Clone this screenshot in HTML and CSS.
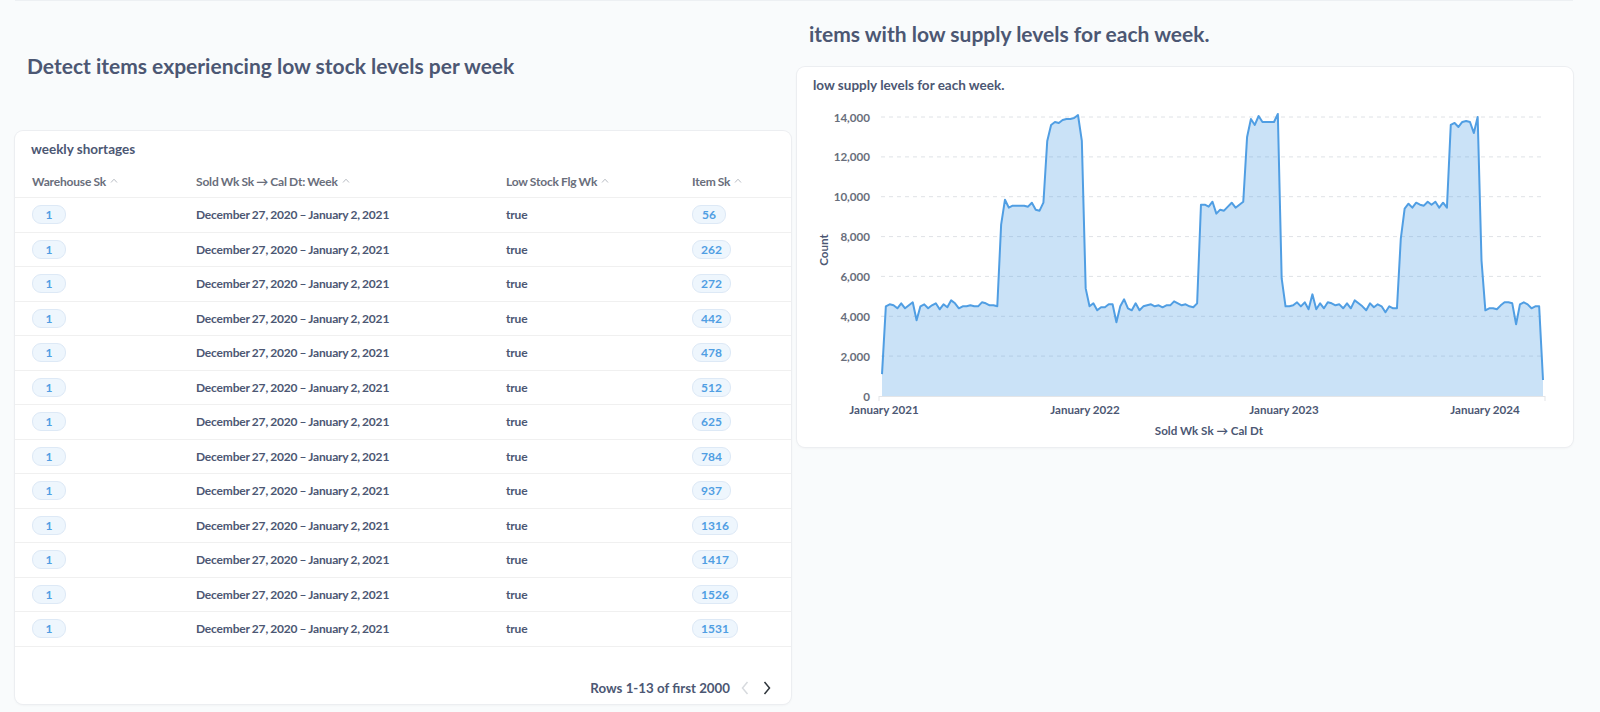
FILE: index.html
```html
<!DOCTYPE html>
<html lang="en">
<head>
<meta charset="utf-8">
<title>Low stock dashboard</title>
<link rel="stylesheet" href="styles.css">
</head>
<body>
<div class="dashboard">
  <div class="col">
    <div class="heading heading-left">Detect items experiencing low stock levels per week</div>
    <div class="card table-card">
      <div class="card-title">weekly shortages</div>
      <div class="trow thead">
        <div class="th">Warehouse Sk<svg class="caret" viewBox="0 0 8 5" width="8" height="5"><polyline points="1,4.5 4,1.2 7,4.5"/></svg></div>
        <div class="th">Sold Wk Sk → Cal Dt: Week<svg class="caret" viewBox="0 0 8 5" width="8" height="5"><polyline points="1,4.5 4,1.2 7,4.5"/></svg></div>
        <div class="th">Low Stock Flg Wk<svg class="caret" viewBox="0 0 8 5" width="8" height="5"><polyline points="1,4.5 4,1.2 7,4.5"/></svg></div>
        <div class="th">Item Sk<svg class="caret" viewBox="0 0 8 5" width="8" height="5"><polyline points="1,4.5 4,1.2 7,4.5"/></svg></div>
      </div>
      <div class="trow"><div><span class="pill">1</span></div><div>December 27, 2020 – January 2, 2021</div><div>true</div><div><span class="pill">56</span></div></div>
      <div class="trow"><div><span class="pill">1</span></div><div>December 27, 2020 – January 2, 2021</div><div>true</div><div><span class="pill">262</span></div></div>
      <div class="trow"><div><span class="pill">1</span></div><div>December 27, 2020 – January 2, 2021</div><div>true</div><div><span class="pill">272</span></div></div>
      <div class="trow"><div><span class="pill">1</span></div><div>December 27, 2020 – January 2, 2021</div><div>true</div><div><span class="pill">442</span></div></div>
      <div class="trow"><div><span class="pill">1</span></div><div>December 27, 2020 – January 2, 2021</div><div>true</div><div><span class="pill">478</span></div></div>
      <div class="trow"><div><span class="pill">1</span></div><div>December 27, 2020 – January 2, 2021</div><div>true</div><div><span class="pill">512</span></div></div>
      <div class="trow"><div><span class="pill">1</span></div><div>December 27, 2020 – January 2, 2021</div><div>true</div><div><span class="pill">625</span></div></div>
      <div class="trow"><div><span class="pill">1</span></div><div>December 27, 2020 – January 2, 2021</div><div>true</div><div><span class="pill">784</span></div></div>
      <div class="trow"><div><span class="pill">1</span></div><div>December 27, 2020 – January 2, 2021</div><div>true</div><div><span class="pill">937</span></div></div>
      <div class="trow"><div><span class="pill">1</span></div><div>December 27, 2020 – January 2, 2021</div><div>true</div><div><span class="pill">1316</span></div></div>
      <div class="trow"><div><span class="pill">1</span></div><div>December 27, 2020 – January 2, 2021</div><div>true</div><div><span class="pill">1417</span></div></div>
      <div class="trow"><div><span class="pill">1</span></div><div>December 27, 2020 – January 2, 2021</div><div>true</div><div><span class="pill">1526</span></div></div>
      <div class="trow"><div><span class="pill">1</span></div><div>December 27, 2020 – January 2, 2021</div><div>true</div><div><span class="pill">1531</span></div></div>
      <div class="tfoot">
        <span class="rows-text">Rows 1-13 of first 2000</span>
        <svg class="nav nav-prev" viewBox="0 0 8 14" width="8" height="14"><polyline points="6.5,1 1.5,7 6.5,13"/></svg>
        <svg class="nav nav-next" viewBox="0 0 8 14" width="8" height="14"><polyline points="1.5,1 6.5,7 1.5,13"/></svg>
      </div>
    </div>
  </div>
  <div class="col">
    <div class="heading heading-right">items with low supply levels for each week.</div>
    <div class="card chart-card">
      <div class="card-title">low supply levels for each week.</div>
      <svg class="chart" viewBox="0 0 776 353" width="776" height="353">
        <g class="grid">
          <line x1="84" y1="262.1" x2="747" y2="262.1"/>
          <line x1="84" y1="222.3" x2="747" y2="222.3"/>
          <line x1="84" y1="182.4" x2="747" y2="182.4"/>
          <line x1="84" y1="142.6" x2="747" y2="142.6"/>
          <line x1="84" y1="102.7" x2="747" y2="102.7"/>
          <line x1="84" y1="62.9" x2="747" y2="62.9"/>
          <line x1="84" y1="23" x2="747" y2="23"/>
        </g>
        <g class="ylabels">
          <text x="73" y="302">0</text>
          <text x="73" y="262.1">2,000</text>
          <text x="73" y="222.3">4,000</text>
          <text x="73" y="182.4">6,000</text>
          <text x="73" y="142.6">8,000</text>
          <text x="73" y="102.7">10,000</text>
          <text x="73" y="62.9">12,000</text>
          <text x="73" y="23">14,000</text>
        </g>
        <g transform="translate(85 302) scale(3.843 -0.019929)">
          <path class="area" d="M0,0 L0,1100 1,4500 2,4600 3,4550 4,4400 5,4650 6,4400 7,4550 8,4700 9,3800 10,4500 11,4600 12,4400 13,4550 14,4650 15,4350 16,4600 17,4450 18,4800 19,4650 20,4400 21,4500 22,4500 23,4550 24,4500 25,4500 26,4700 27,4650 28,4550 29,4550 30,4500 31,8600 32,9850 33,9450 34,9550 35,9550 36,9550 37,9550 38,9500 39,9700 40,9350 41,9300 42,9700 43,12800 44,13600 45,13750 46,13700 47,13850 48,13900 49,13900 50,13950 51,14100 52,12800 53,5400 54,4500 55,4650 56,4300 57,4450 58,4450 59,4600 60,4600 61,3700 62,4500 63,4850 64,4400 65,4300 66,4650 67,4300 68,4500 69,4550 70,4600 71,4500 72,4550 73,4450 74,4550 75,4550 76,4750 77,4650 78,4550 79,4600 80,4500 81,4450 82,4650 83,9600 84,9600 85,9500 86,9750 87,9150 88,9350 89,9300 90,9500 91,9700 92,9450 93,9600 94,9750 95,13000 96,13900 97,13600 98,14050 99,13750 100,13750 101,13750 102,13750 103,14150 104,5900 105,4500 106,4500 107,4550 108,4700 109,4500 110,4700 111,4350 112,5100 113,4350 114,4650 115,4400 116,4700 117,4650 118,4550 119,4600 120,4400 121,4650 122,4400 123,4800 124,4650 125,4500 126,4300 127,4650 128,4450 129,4600 130,4500 131,4200 132,4500 133,4400 134,4400 135,7900 136,9400 137,9650 138,9450 139,9700 140,9600 141,9550 142,9750 143,9600 144,9750 145,9450 146,9700 147,9450 148,13600 149,13700 150,13500 151,13750 152,13800 153,13750 154,13200 155,14000 156,6800 157,4300 158,4400 159,4400 160,4350 161,4550 162,4700 163,4700 164,4650 165,3600 166,4600 167,4700 168,4600 169,4400 170,4500 171,4500 172,800 L172,0 Z"/>
          <polyline class="line" points="0,1100 1,4500 2,4600 3,4550 4,4400 5,4650 6,4400 7,4550 8,4700 9,3800 10,4500 11,4600 12,4400 13,4550 14,4650 15,4350 16,4600 17,4450 18,4800 19,4650 20,4400 21,4500 22,4500 23,4550 24,4500 25,4500 26,4700 27,4650 28,4550 29,4550 30,4500 31,8600 32,9850 33,9450 34,9550 35,9550 36,9550 37,9550 38,9500 39,9700 40,9350 41,9300 42,9700 43,12800 44,13600 45,13750 46,13700 47,13850 48,13900 49,13900 50,13950 51,14100 52,12800 53,5400 54,4500 55,4650 56,4300 57,4450 58,4450 59,4600 60,4600 61,3700 62,4500 63,4850 64,4400 65,4300 66,4650 67,4300 68,4500 69,4550 70,4600 71,4500 72,4550 73,4450 74,4550 75,4550 76,4750 77,4650 78,4550 79,4600 80,4500 81,4450 82,4650 83,9600 84,9600 85,9500 86,9750 87,9150 88,9350 89,9300 90,9500 91,9700 92,9450 93,9600 94,9750 95,13000 96,13900 97,13600 98,14050 99,13750 100,13750 101,13750 102,13750 103,14150 104,5900 105,4500 106,4500 107,4550 108,4700 109,4500 110,4700 111,4350 112,5100 113,4350 114,4650 115,4400 116,4700 117,4650 118,4550 119,4600 120,4400 121,4650 122,4400 123,4800 124,4650 125,4500 126,4300 127,4650 128,4450 129,4600 130,4500 131,4200 132,4500 133,4400 134,4400 135,7900 136,9400 137,9650 138,9450 139,9700 140,9600 141,9550 142,9750 143,9600 144,9750 145,9450 146,9700 147,9450 148,13600 149,13700 150,13500 151,13750 152,13800 153,13750 154,13200 155,14000 156,6800 157,4300 158,4400 159,4400 160,4350 161,4550 162,4700 163,4700 164,4650 165,3600 166,4600 167,4700 168,4600 169,4400 170,4500 171,4500 172,800"/>
        </g>
        <g class="axis">
          <line x1="82" y1="302.5" x2="748" y2="302.5"/>
          <line x1="82" y1="302" x2="82" y2="307"/>
          <line x1="748" y1="302" x2="748" y2="307"/>
        </g>
        <g class="xlabels">
          <text x="87" y="315">January 2021</text>
          <text x="288" y="315">January 2022</text>
          <text x="487" y="315">January 2023</text>
          <text x="688" y="315">January 2024</text>
        </g>
        <text class="xtitle" x="412" y="336">Sold Wk Sk → Cal Dt</text>
        <text class="ytitle" x="26" y="156" transform="rotate(-90 26 156)">Count</text>
      </svg>
    </div>
  </div>
</div>
</body>
</html>
```

FILE: styles.css
```css
* { box-sizing: border-box; }

html, body {
  margin: 0;
  height: 712px;
  overflow: hidden;
}

body {
  background: #f9fbfc;
  font-family: Lato, "Noto Sans", sans-serif;
  color: #4c5773;
}

.dashboard {
  display: grid;
  grid-template-columns: 776px 776px;
  column-gap: 6px;
  align-items: start;
  padding: 6px 27px 0 15px;
  height: 712px;
  background: linear-gradient(#edf0f3, #edf0f3) 15px 0 / 1558px 1px no-repeat;
}

.col {
  display: flex;
  flex-direction: column;
  gap: 6px;
}

.heading {
  display: flex;
  align-items: center;
  padding: 0 12px;
  font-size: 21px;
  font-weight: 700;
  color: #4c5773;
}

.heading-left { height: 119px; }
.heading-right { height: 55px; }

.card {
  background: #fff;
  border-radius: 8px;
  box-shadow: 0 0 0 1px #eceef1, 0 1px 3px rgba(0, 0, 0, 0.06);
}

.card-title {
  padding: 10px 16px 0;
  font-size: 13.5px;
  line-height: 16px;
  font-weight: 700;
  color: #4c5773;
}

/* table card */
.table-card {
  height: 573px;
  display: flex;
  flex-direction: column;
}

.table-card .card-title { height: 35px; }

.trow {
  display: grid;
  grid-template-columns: 164px 310px 186px 1fr;
  align-items: center;
  padding-left: 17px;
  height: 34.5px;
  border-bottom: 1px solid #f0f0f0;
  font-size: 12px;
  font-weight: 700;
  letter-spacing: -0.18px;
  word-spacing: -0.5px;
  color: #4c5773;
}

.thead {
  height: 32px;
  color: #696e7b;
}

.th {
  display: flex;
  align-items: center;
  gap: 4px;
}

.caret {
  fill: none;
  stroke: #b9bdc4;
  stroke-width: 1;
  margin-top: -3px;
}

.pill {
  display: inline-block;
  min-width: 34px;
  height: 19px;
  line-height: 17px;
  padding: 0 8px;
  text-align: center;
  border-radius: 9px;
  background: #eef6fd;
  border: 1px solid #dde9f6;
  color: #509ee3;
  font-size: 12px;
  font-weight: 700;
  letter-spacing: 0;
}

.tfoot {
  flex: 1;
  display: flex;
  align-items: flex-end;
  justify-content: flex-end;
  padding: 0 20px 8px 0;
}

.rows-text {
  font-size: 13.3px;
  font-weight: 700;
  line-height: 16px;
  color: #4c5773;
  margin-right: 11px;
}

.nav {
  fill: none;
  stroke-width: 1.5;
  margin-bottom: 1px;
}

.nav-prev { stroke: #d7dade; margin-right: 14px; }
.nav-next { stroke: #2e353b; }

/* chart card */
.chart-card {
  height: 380px;
  display: flex;
  flex-direction: column;
}

.chart-card .card-title { height: 27px; }

.chart {
  display: block;
  font-family: Lato, "Noto Sans", sans-serif;
}

.grid line {
  stroke: #dfe2e6;
  stroke-width: 1;
  stroke-dasharray: 4 4;
}

.ylabels text {
  font-size: 11.6px;
  font-weight: 700;
  fill: #696e7b;
  text-anchor: end;
  dominant-baseline: central;
}

.xlabels text {
  font-size: 11.6px;
  font-weight: 700;
  fill: #4c5773;
  text-anchor: middle;
  dominant-baseline: central;
}

.area {
  fill: #509ee3;
  fill-opacity: 0.3;
}

.line {
  fill: none;
  stroke: #509ee3;
  stroke-width: 2;
  stroke-linejoin: round;
  vector-effect: non-scaling-stroke;
}

.axis line {
  stroke: #e3e5e8;
  stroke-width: 1;
}

.xtitle, .ytitle {
  font-size: 11.6px;
  font-weight: 700;
  fill: #4c5773;
  text-anchor: middle;
  dominant-baseline: central;
}
```
